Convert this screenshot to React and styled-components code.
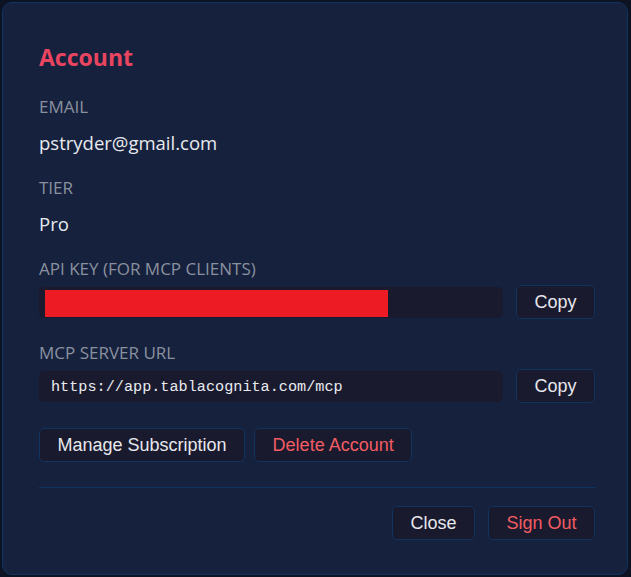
import React from 'react'
import styled, { createGlobalStyle } from 'styled-components'

//STYLES
const GlobalStyle = createGlobalStyle`
  html, body {
    margin: 0;
    padding: 0;
    background: #0d1322;
  }
  body {
    font-family: "Open Sans", "Noto Sans", sans-serif;
  }
  * {
    box-sizing: border-box;
  }
`

const AccountDialog = () => {
  return (
    <>
      <GlobalStyle />
      <Overlay>
        <Dialog>
          <Title>Account</Title>

          <Field $first>
            <Label>Email</Label>
            <Value>pstryder@gmail.com</Value>
          </Field>

          <Field>
            <Label>Tier</Label>
            <Value>Pro</Value>
          </Field>

          <Field>
            <Label>API Key (for MCP clients)</Label>
            <Row>
              <Input $redacted>
                <Redacted />
              </Input>
              <Button>Copy</Button>
            </Row>
          </Field>

          <Field $afterRow>
            <Label>MCP Server URL</Label>
            <Row>
              <Input>https://app.tablacognita.com/mcp</Input>
              <Button>Copy</Button>
            </Row>
          </Field>

          <Actions>
            <Button>Manage Subscription</Button>
            <Button $danger>Delete Account</Button>
          </Actions>

          <Footer>
            <Button>Close</Button>
            <Button $danger>Sign Out</Button>
          </Footer>
        </Dialog>
      </Overlay>
    </>
  )
}

const Overlay = styled.div`
  width: 631px;
  height: 577px;
  padding: 2px 3px 0 2px;
  overflow: hidden;
`

const Dialog = styled.div`
  height: 573px;
  background: #16213e;
  border: 1px solid #0f3460;
  border-radius: 10px;
  padding: 40px 32px 0 36px;
`

const Title = styled.h2`
  margin: 0;
  font-size: 23px;
  line-height: 28px;
  font-weight: 700;
  color: #e94560;
`

const Field = styled.div`
  margin-top: ${p => (p.$first ? '26px' : p.$afterRow ? '24px' : '23px')};
`

const Label = styled.div`
  font-size: 17px;
  line-height: 20px;
  text-transform: uppercase;
  color: #8a919e;
`

const Value = styled.div`
  font-size: 18.5px;
  line-height: 24px;
  color: #e8eaee;
  margin-top: 14px;
`

const Row = styled.div`
  display: flex;
  align-items: center;
  gap: 13px;
  margin-top: 6px;
`

const Input = styled.div`
  flex: 1;
  height: 31px;
  display: flex;
  align-items: ${p => (p.$redacted ? 'stretch' : 'center')};
  padding: ${p => (p.$redacted ? '3px 6px 1px' : '1px 12px 0')};
  background: #1a1a2e;
  border-radius: 5px;
  font-family: "Liberation Mono", "DejaVu Sans Mono", monospace;
  font-size: 15.2px;
  color: #e8eaee;
`

const Redacted = styled.div`
  width: 343px;
  background: #ed1c24;
`

const Button = styled.button`
  height: 34px;
  padding: 0 17.5px;
  background: #1a1a2e;
  border: 1px solid #0f3460;
  border-radius: 5px;
  font-family: "Liberation Sans", Arial, sans-serif;
  font-size: 18px;
  color: ${p => (p.$danger ? '#f25c62' : '#e6e8ec')};
  cursor: pointer;
`

const Actions = styled.div`
  display: flex;
  gap: 9px;
  margin-top: 25px;
  padding-bottom: 25px;
  border-bottom: 1px solid #0f3460;
`

const Footer = styled.div`
  display: flex;
  justify-content: flex-end;
  gap: 13px;
  margin-top: 18px;
`

export default AccountDialog
